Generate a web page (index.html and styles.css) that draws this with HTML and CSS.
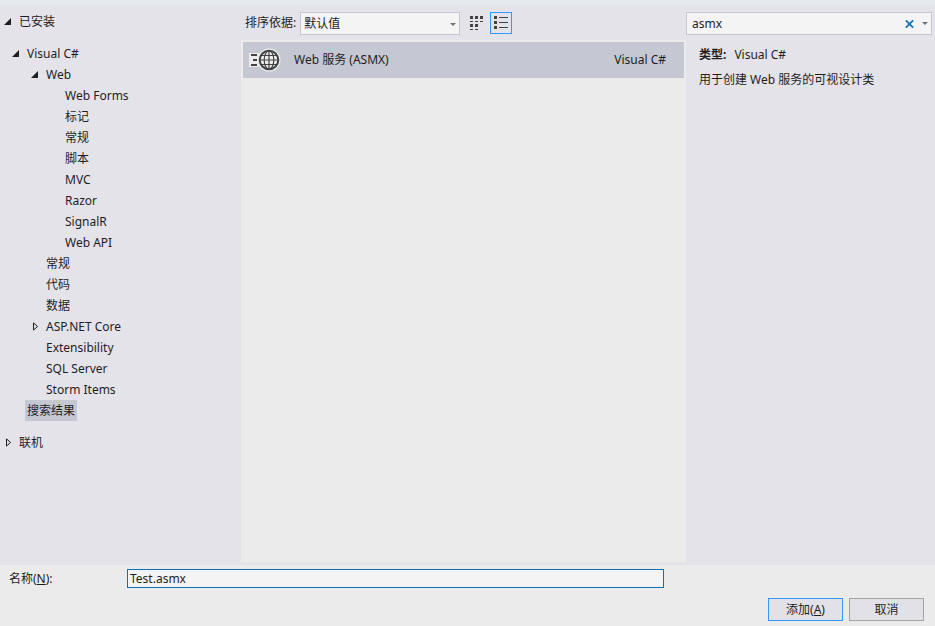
FILE: index.html
```html
<!doctype html>
<html lang="zh-CN">

<head>
  <meta charset="utf-8">
  <title>添加新项</title>
  <link rel="stylesheet" href="styles.css">
</head>

<body>
  <form class="dialog">
    <div class="main">
      <nav class="tree">
        <ul>
          <li>
            <div class="row">
              <button type="button" class="arrow" aria-label="折叠"><svg width="7" height="7"><path d="M7 0V7H0z" /></svg></button>
              <span class="text">已安装</span>
            </div>
            <ul class="installed">
              <li>
                <div class="row">
                  <button type="button" class="arrow" aria-label="折叠"><svg width="7" height="7"><path d="M7 0V7H0z" /></svg></button>
                  <span class="text">Visual C#</span>
                </div>
                <ul class="sub">
                  <li>
                    <div class="row">
                      <button type="button" class="arrow" aria-label="折叠"><svg width="7" height="7"><path d="M7 0V7H0z" /></svg></button>
                      <span class="text">Web</span>
                    </div>
                    <ul class="sub">
                      <li class="row leaf"><span class="text">Web Forms</span></li>
                      <li class="row leaf"><span class="text">标记</span></li>
                      <li class="row leaf"><span class="text">常规</span></li>
                      <li class="row leaf"><span class="text">脚本</span></li>
                      <li class="row leaf"><span class="text">MVC</span></li>
                      <li class="row leaf"><span class="text">Razor</span></li>
                      <li class="row leaf"><span class="text">SignalR</span></li>
                      <li class="row leaf"><span class="text">Web API</span></li>
                    </ul>
                  </li>
                  <li class="row leaf"><span class="text">常规</span></li>
                  <li class="row leaf"><span class="text">代码</span></li>
                  <li class="row leaf"><span class="text">数据</span></li>
                  <li class="row">
                    <button type="button" class="arrow closed" aria-label="展开"><svg width="6" height="9"><path d="M.5 .9V8.1L4.6 4.5z" /></svg></button>
                    <span class="text">ASP.NET Core</span>
                  </li>
                  <li class="row leaf"><span class="text">Extensibility</span></li>
                  <li class="row leaf"><span class="text">SQL Server</span></li>
                  <li class="row leaf"><span class="text">Storm Items</span></li>
                </ul>
              </li>
              <li class="row leaf"><span class="text selected">搜索结果</span></li>
            </ul>
          </li>
          <li class="row">
            <button type="button" class="arrow closed" aria-label="展开"><svg width="6" height="9"><path d="M.5 .9V8.1L4.6 4.5z" /></svg></button>
            <span class="text">联机</span>
          </li>
        </ul>
      </nav>

      <section class="center">
        <div class="toolbar">
          <label for="sort">排序依据:</label>
          <div class="combo">
            <select id="sort">
              <option>默认值</option>
            </select>
            <svg class="drop" width="6" height="3"><path d="M0 0H6L3 3z" /></svg>
          </div>
          <button type="button" class="view" aria-label="中等图标">
            <svg width="14" height="14" shape-rendering="crispEdges">
              <path d="M0 0h3v3H0zM5 0h3v3H5zM10 0h3v3h-3zM0 5h3v1H0zM5 5h3v1H5zM10 5h3v1h-3zM0 8h3v3H0zM5 8h3v3H5zM0 13h3v1H0zM5 13h3v1H5z" />
            </svg>
          </button>
          <button type="button" class="view active" aria-label="小图标">
            <svg width="14" height="14" shape-rendering="crispEdges">
              <path d="M0 0h3v3H0zM0 5h3v3H0zM0 10h3v3H0zM5 1h9v1H5zM5 6h9v1H5zM5 11h9v1H5z" />
            </svg>
          </button>
        </div>
        <ul class="list">
          <li class="item">
            <svg class="globe" width="32" height="24" viewBox="0 0 32 24">
              <path d="M0 5h10v14H0z" fill="#ececee" />
              <circle cx="20" cy="12" r="11.5" fill="#ececee" />
              <g fill="none" stroke="#424242">
                <path d="M2 7h6M4 12h4M2 17h6" stroke-width="2" />
                <circle cx="20" cy="12" r="9.3" stroke-width="2" />
                <ellipse cx="20" cy="12" rx="4.8" ry="9.3" stroke-width="1.2" />
                <path d="M20 3v18M11 12h18M12.5 7.5h15M12.5 16.5h15" stroke-width="1.2" />
              </g>
            </svg>
            <span class="name">Web 服务 (ASMX)</span>
            <span class="lang">Visual C#</span>
          </li>
        </ul>
      </section>

      <aside class="side">
        <div class="search">
          <input type="text" value="asmx" aria-label="搜索">
          <button type="button" aria-label="清除"><svg width="9" height="8"><path d="M.8 .3L8.2 7.7M8.2 .3L.8 7.7" fill="none" stroke="#1b74bf" stroke-width="1.8" /></svg></button>
          <button type="button" aria-label="搜索选项"><svg class="drop" width="6" height="3"><path d="M0 0H6L3 3z" /></svg></button>
        </div>
        <div class="info">
          <p><b>类型:</b>Visual C#</p>
          <p>用于创建 Web 服务的可视设计类</p>
        </div>
      </aside>
    </div>

    <div class="footer">
      <div class="field">
        <label for="name">名称(<u>N</u>):</label>
        <input type="text" id="name" value="Test.asmx">
      </div>
      <div class="buttons">
        <button type="submit" class="btn primary">添加(<u>A</u>)</button>
        <button type="button" class="btn">取消</button>
      </div>
    </div>
  </form>
</body>

</html>
```
FILE: styles.css
```css
* {
  margin: 0;
  padding: 0;
  box-sizing: border-box;
}
body, input, select, button {
  font: 12px/16px "Noto Sans", "Noto Sans CJK SC", sans-serif;
  color: #1e1e1e;
}
ul {
  list-style: none;
}
svg {
  display: block;
}
button {
  border: none;
  background: none;
}
input, select {
  outline: none;
}
.dialog {
  display: flex;
  flex-direction: column;
  min-height: 100vh;
  border-top: 6px solid #e3e9ed;
  background: #ebebeb;
}
.main {
  flex: 1;
  display: grid;
  grid-template-columns: 241px 1fr 249px;
  background: #e4e3e9;
}

/* 左侧树 */
.tree {
  padding: 5px 0 0 4px;
}
.row {
  display: flex;
  align-items: center;
  height: 21px;
}
.installed {
  padding: 11px 0 11px 8px;
}
.sub {
  padding-left: 19px;
}
.arrow {
  width: 13px;
}
.arrow path {
  fill: #1e1e1e;
}
.arrow.closed {
  padding-left: 2px;
}
.arrow.closed path {
  fill: none;
  stroke: #1e1e1e;
}
.leaf {
  padding-left: 13px;
}
.text {
  padding: 0 2px;
  line-height: 21px;
}
.selected {
  background: #c5c7d3;
}

/* 中间列表 */
.center {
  display: flex;
  flex-direction: column;
  padding-bottom: 3px;
}
.toolbar {
  display: flex;
  align-items: center;
  height: 34px;
  padding-left: 4px;
}
.combo {
  position: relative;
  width: 160px;
  margin: 0 5px 0 4px;
}
.combo select {
  display: block;
  width: 100%;
  height: 23px;
  padding: 1px 0 0 3px;
  appearance: none;
  border: 1px solid #c5c7d3;
  border-radius: 0;
  background: #f4f4f4;
}
.combo .drop {
  position: absolute;
  right: 4px;
  top: 11px;
}
.drop {
  fill: #717171;
}
.view {
  width: 22px;
  height: 22px;
  margin-right: 3px;
  padding-left: 5px;
}
.view path {
  fill: #424242;
}
.view.active {
  padding-left: 3px;
  border: 1px solid #3399ff;
}
.list {
  flex: 1;
  padding: 2px;
  background: #ebebeb;
}
.item {
  display: flex;
  align-items: center;
  height: 36px;
  padding: 0 18px 0 6px;
  line-height: 18px;
  background: #c5c7d3;
}
.name {
  flex: 1;
  padding-left: 13px;
}

/* 右侧搜索和说明 */
.side {
  padding: 6px 3px 0 0;
}
.search {
  display: flex;
  height: 23px;
  border: 1px solid #c5c7d3;
  background: #f4f4f4;
}
.search input {
  flex: 1;
  min-width: 0;
  padding-left: 5px;
  border: none;
  background: none;
}
.search button {
  padding: 0 3px;
}
.search button:first-of-type {
  padding: 0 5px;
}
.info {
  padding: 7px 13px;
}
.info p {
  line-height: 25px;
}
.info b {
  margin-right: 8px;
}

/* 底部 */
.footer {
  padding: 4px 11px 5px 9px;
}
.field {
  display: flex;
  align-items: center;
}
.field label {
  width: 118px;
}
.field input {
  flex: 1;
  height: 19px;
  margin-right: 260px;
  padding-left: 2px;
  border: 1px solid #0e70b8;
  background: #f4f4f4;
}
.buttons {
  display: flex;
  justify-content: flex-end;
  gap: 6px;
  margin-top: 10px;
}
.btn {
  width: 75px;
  height: 23px;
  border: 1px solid #a3a3a3;
  background: #e1e1e7;
}
.primary {
  border-color: #3399ff;
}
```
